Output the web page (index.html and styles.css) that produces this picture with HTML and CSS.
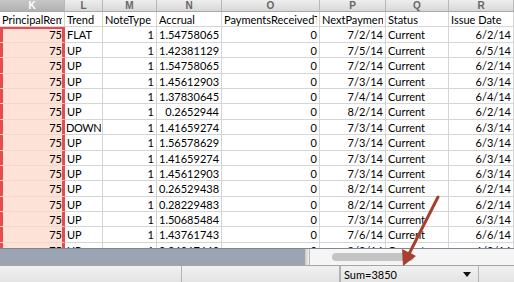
FILE: index.html
```html
<!DOCTYPE html>
<html lang="en">
<head>
    <meta charset="UTF-8">
    <title>Sheet1</title>
    <link rel="stylesheet" href="styles.css">
</head>
<body>
    <div class="window">
        <div class="sheet">
            <div class="row heads">
                <div class="head sel">K</div>
                <div class="head">L</div>
                <div class="head">M</div>
                <div class="head">N</div>
                <div class="head">O</div>
                <div class="head">P</div>
                <div class="head">Q</div>
                <div class="head">R</div>
            </div>
            <div class="row">
                <div class="cell"><span>PrincipalRemaining</span></div>
                <div class="cell"><span>Trend</span></div>
                <div class="cell"><span>NoteType</span></div>
                <div class="cell"><span>Accrual</span></div>
                <div class="cell"><span>PaymentsReceivedToDate</span></div>
                <div class="cell"><span>NextPaymentDate</span></div>
                <div class="cell"><span>Status</span></div>
                <div class="cell"><span>Issue Date</span></div>
            </div>
            <div class="row">
                <div class="cell k top num">75</div><div class="cell">FLAT</div><div class="cell num">1</div><div class="cell num">1.54758065</div>
                <div class="cell num">0</div><div class="cell num">7/2/14</div><div class="cell">Current</div><div class="cell num">6/2/14</div>
            </div>
            <div class="row">
                <div class="cell k num">75</div><div class="cell">UP</div><div class="cell num">1</div><div class="cell num">1.42381129</div>
                <div class="cell num">0</div><div class="cell num">7/5/14</div><div class="cell">Current</div><div class="cell num">6/5/14</div>
            </div>
            <div class="row">
                <div class="cell k num">75</div><div class="cell">UP</div><div class="cell num">1</div><div class="cell num">1.54758065</div>
                <div class="cell num">0</div><div class="cell num">7/2/14</div><div class="cell">Current</div><div class="cell num">6/2/14</div>
            </div>
            <div class="row">
                <div class="cell k num">75</div><div class="cell">UP</div><div class="cell num">1</div><div class="cell num">1.45612903</div>
                <div class="cell num">0</div><div class="cell num">7/3/14</div><div class="cell">Current</div><div class="cell num">6/3/14</div>
            </div>
            <div class="row">
                <div class="cell k num">75</div><div class="cell">UP</div><div class="cell num">1</div><div class="cell num">1.37830645</div>
                <div class="cell num">0</div><div class="cell num">7/4/14</div><div class="cell">Current</div><div class="cell num">6/4/14</div>
            </div>
            <div class="row">
                <div class="cell k num">75</div><div class="cell">UP</div><div class="cell num">1</div><div class="cell num">0.2652944</div>
                <div class="cell num">0</div><div class="cell num">8/2/14</div><div class="cell">Current</div><div class="cell num">6/2/14</div>
            </div>
            <div class="row">
                <div class="cell k num">75</div><div class="cell tight">DOWN</div><div class="cell num">1</div><div class="cell num">1.41659274</div>
                <div class="cell num">0</div><div class="cell num">7/3/14</div><div class="cell">Current</div><div class="cell num">6/3/14</div>
            </div>
            <div class="row">
                <div class="cell k num">75</div><div class="cell">UP</div><div class="cell num">1</div><div class="cell num">1.56578629</div>
                <div class="cell num">0</div><div class="cell num">7/3/14</div><div class="cell">Current</div><div class="cell num">6/3/14</div>
            </div>
            <div class="row">
                <div class="cell k num">75</div><div class="cell">UP</div><div class="cell num">1</div><div class="cell num">1.41659274</div>
                <div class="cell num">0</div><div class="cell num">7/3/14</div><div class="cell">Current</div><div class="cell num">6/3/14</div>
            </div>
            <div class="row">
                <div class="cell k num">75</div><div class="cell">UP</div><div class="cell num">1</div><div class="cell num">1.45612903</div>
                <div class="cell num">0</div><div class="cell num">7/3/14</div><div class="cell">Current</div><div class="cell num">6/3/14</div>
            </div>
            <div class="row">
                <div class="cell k num">75</div><div class="cell">UP</div><div class="cell num">1</div><div class="cell num">0.26529438</div>
                <div class="cell num">0</div><div class="cell num">8/2/14</div><div class="cell">Current</div><div class="cell num">6/2/14</div>
            </div>
            <div class="row">
                <div class="cell k num">75</div><div class="cell">UP</div><div class="cell num">1</div><div class="cell num">0.28229483</div>
                <div class="cell num">0</div><div class="cell num">8/2/14</div><div class="cell">Current</div><div class="cell num">6/2/14</div>
            </div>
            <div class="row">
                <div class="cell k num">75</div><div class="cell">UP</div><div class="cell num">1</div><div class="cell num">1.50685484</div>
                <div class="cell num">0</div><div class="cell num">7/3/14</div><div class="cell">Current</div><div class="cell num">6/3/14</div>
            </div>
            <div class="row">
                <div class="cell k num">75</div><div class="cell">UP</div><div class="cell num">1</div><div class="cell num">1.43761743</div>
                <div class="cell num">0</div><div class="cell num">7/6/14</div><div class="cell">Current</div><div class="cell num">6/6/14</div>
            </div>
            <div class="row">
                <div class="cell k num">75</div><div class="cell">UP</div><div class="cell num">1</div><div class="cell num">0.34967643</div>
                <div class="cell num">0</div><div class="cell num">8/2/14</div><div class="cell">Current</div><div class="cell num">6/2/14</div>
            </div>
        </div>

        <div class="hbar">
            <div class="tabs"></div>
            <div class="split"></div>
            <div class="hscroll"><div class="thumb"></div></div>
        </div>

        <div class="status">
            <div class="pane pane-left"></div>
            <div class="pane pane-mid"></div>
            <div class="pane sum">Sum=3850<span class="caret"></span></div>
            <div class="pane pane-right"></div>
        </div>

        <!-- annotation arrow pointing at the sum -->
        <svg class="arrow" width="514" height="282" viewBox="0 0 514 282">
            <line x1="438" y1="197" x2="409" y2="254" stroke="#a9402f" stroke-width="3" stroke-linecap="round"/>
            <polygon points="403,266 402,249 416,256" fill="#a9402f"/>
        </svg>
    </div>
</body>
</html>
```

FILE: styles.css
```css
* {
    box-sizing: border-box;
    margin: 0;
    padding: 0;
}
body {
    background: #ffffff;
    font-family: 'Lato', 'Liberation Sans', sans-serif;
    font-size: 11px;
    color: #000;
}
.window {
    position: relative;
    width: 514px;
    height: 282px;
    overflow: hidden;
    display: flex;
    flex-direction: column;
}
.sheet {
    height: 248px;
    overflow: hidden;
}
.row {
    display: grid;
    grid-template-columns: 65px 38px 54px 65px 98px 66px 63px 65px;
    height: 15.4px;
}
.row.heads {
    height: 12px;
}
.head {
    background: linear-gradient(#eeeeee, #d8d8d8);
    border-right: 1px solid #b8b8b8;
    border-bottom: 1px solid #a8a8a8;
    font-family: 'Liberation Sans', sans-serif;
    font-weight: bold;
    font-size: 10px;
    color: #666666;
    text-align: center;
    line-height: 11px;
}
.head.sel {
    background: linear-gradient(#c6c6c6, #b2b2b2);
    color: #ffffff;
}
.cell {
    border-right: 1px solid #d5d5d5;
    border-bottom: 1px solid #d5d5d5;
    padding: 0 2px;
    white-space: nowrap;
    overflow: hidden;
    line-height: 15px;
}
/* clipped header labels, like Excel cuts them at the column edge */
.cell span {
    display: block;
    overflow: hidden;
}
.cell.tight {
    padding: 0 1px;
    letter-spacing: -0.4px;
}
.num {
    text-align: right;
}
.k {
    background: #fde3d7;
    border-right-color: #e94a4f;
    border-bottom-color: #f6d6c8;
    box-shadow: inset 3px 0 #e94a4f, inset -2px 0 #e94a4f;
}
.k.top {
    box-shadow: inset 3px 0 #e94a4f, inset -2px 0 #e94a4f, inset 0 2px #e94a4f;
}

/* bottom strip: sheet tabs + horizontal scroller */
.hbar {
    height: 17px;
    display: flex;
    border-top: 1px solid #7e8794;
}
.tabs {
    width: 305px;
    background: #9aa4b3;
}
.split {
    width: 5px;
    background: linear-gradient(to right, #c9c9c9, #f2f2f2);
    border-right: 1px solid #b9b9b9;
}
.hscroll {
    flex: 1;
    background: #f5f5f5;
    padding: 4px 0 0 22px;
}
.thumb {
    width: 82px;
    height: 8px;
    border-radius: 4px;
    background: #c4c4c4;
}

.status {
    height: 17px;
    display: flex;
    background: linear-gradient(#f1f1f1, #e4e4e4);
    border-top: 1px solid #a6a6a6;
}
.pane {
    border-right: 1px solid #b3b3b3;
}
.pane-left {
    width: 182px;
}
.pane-mid {
    width: 158px;
}
.sum {
    width: 139px;
    display: flex;
    align-items: center;
    justify-content: space-between;
    padding: 0 7px 0 3px;
    font-size: 11px;
    border-left: 1px solid #b3b3b3;
}
.caret {
    width: 0;
    height: 0;
    border-left: 4px solid transparent;
    border-right: 4px solid transparent;
    border-top: 5px solid #111;
}
.pane-right {
    flex: 1;
    border-right: none;
}
.arrow {
    position: absolute;
    left: 0;
    top: 0;
    pointer-events: none;
}
```
